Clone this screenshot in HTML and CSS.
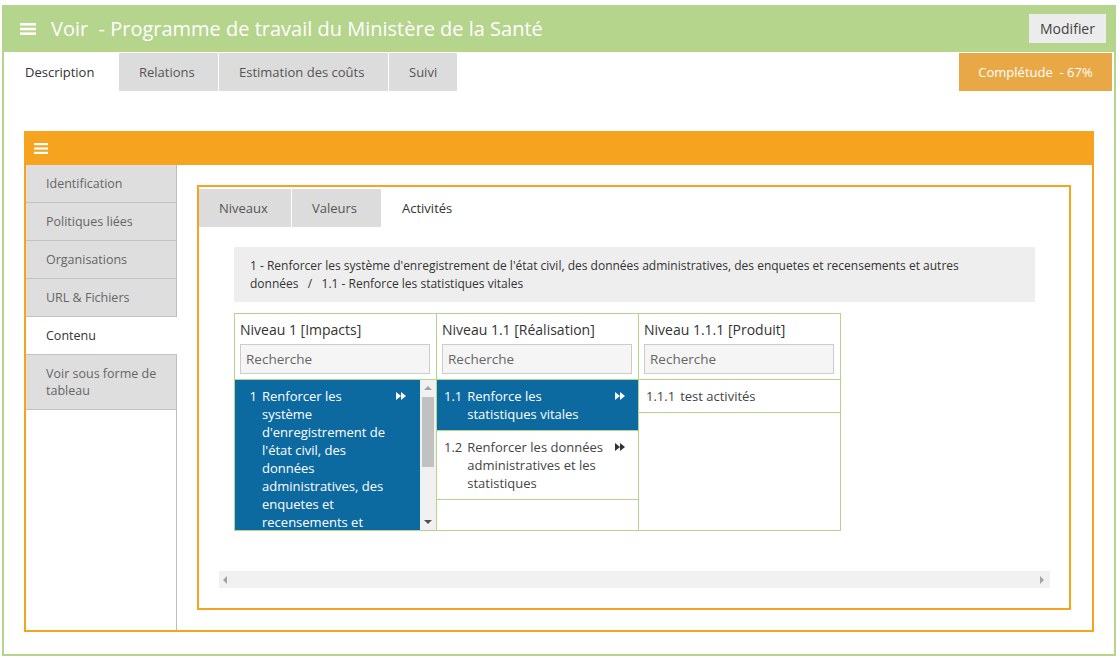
FILE: index.html
```html
<!DOCTYPE html>
<html lang="fr">
<head>
<meta charset="utf-8">
<title>Voir - Programme de travail du Ministère de la Santé</title>
<link rel="stylesheet" href="styles.css">
</head>
<body>
<div class="app">
  <header class="header">
    <svg class="burger" width="16" height="12" viewBox="0 0 16 12"><rect x="0" y="0" width="16" height="2.6" fill="#fff"/><rect x="0" y="4.7" width="16" height="2.6" fill="#fff"/><rect x="0" y="9.4" width="16" height="2.6" fill="#fff"/></svg>
    <h1 class="title">Voir&nbsp; - Programme de travail du Ministère de la Santé</h1>
    <button class="btn-modifier">Modifier</button>
  </header>

  <nav class="tabs">
    <div class="tab tab-desc active">Description</div>
    <div class="tab tab-rel">Relations</div>
    <div class="tab tab-est">Estimation des coûts</div>
    <div class="tab tab-suivi">Suivi</div>
    <div class="completude">Complétude&nbsp; - 67%</div>
  </nav>

  <section class="panel">
    <div class="panel-head">
      <svg width="14" height="11" viewBox="0 0 14 11"><rect x="0" y="0" width="14" height="2.2" fill="#fff"/><rect x="0" y="4.4" width="14" height="2.2" fill="#fff"/><rect x="0" y="8.8" width="14" height="2.2" fill="#fff"/></svg>
    </div>
    <div class="panel-body">
      <ul class="sidenav">
        <li class="nav-item">Identification</li>
        <li class="nav-item">Politiques liées</li>
        <li class="nav-item">Organisations</li>
        <li class="nav-item">URL &amp; Fichiers</li>
        <li class="nav-item active">Contenu</li>
        <li class="nav-item">Voir sous forme de tableau</li>
      </ul>

      <div class="content">
        <div class="box">
          <div class="subtabs">
            <div class="subtab st-niv">Niveaux</div>
            <div class="subtab st-val">Valeurs</div>
            <div class="subtab st-act active">Activités</div>
          </div>
          <div class="box-body">
            <div class="scroll-area">
              <div class="crumb">1 - Renforcer les système d'enregistrement de l'état civil, des données administratives, des enquetes et recensements et autres données&nbsp;&nbsp; / &nbsp;&nbsp;1.1 - Renforce les statistiques vitales</div>

              <div class="columns">
                <div class="col">
                  <div class="col-head">
                    <div class="col-title">Niveau 1 [Impacts]</div>
                    <input class="search" type="text" placeholder="Recherche">
                  </div>
                  <div class="col-list with-bar">
                    <div class="items">
                      <div class="item selected">
                        <span class="num">1</span>
                        <span class="label">Renforcer les système d'enregistrement de l'état civil, des données administratives, des enquetes et recensements et autres données</span>
                        <svg class="go" width="10" height="8" viewBox="0 0 10 8"><path d="M0 0L5 4L0 8Z M5 0L10 4L5 8Z" fill="#fff"/></svg>
                      </div>
                    </div>
                    <div class="vbar">
                      <span class="arrow-up"></span>
                      <span class="thumb"></span>
                      <span class="arrow-down"></span>
                    </div>
                  </div>
                </div>

                <div class="col">
                  <div class="col-head">
                    <div class="col-title">Niveau 1.1 [Réalisation]</div>
                    <input class="search" type="text" placeholder="Recherche">
                  </div>
                  <div class="col-list">
                    <div class="items">
                      <div class="item selected">
                        <span class="num">1.1</span>
                        <span class="label">Renforce les statistiques vitales</span>
                        <svg class="go" width="10" height="8" viewBox="0 0 10 8"><path d="M0 0L5 4L0 8Z M5 0L10 4L5 8Z" fill="#fff"/></svg>
                      </div>
                      <div class="item">
                        <span class="num">1.2</span>
                        <span class="label">Renforcer les données administratives et les statistiques</span>
                        <svg class="go" width="10" height="8" viewBox="0 0 10 8"><path d="M0 0L5 4L0 8Z M5 0L10 4L5 8Z" fill="#333"/></svg>
                      </div>
                    </div>
                  </div>
                </div>

                <div class="col">
                  <div class="col-head">
                    <div class="col-title">Niveau 1.1.1 [Produit]</div>
                    <input class="search" type="text" placeholder="Recherche">
                  </div>
                  <div class="col-list">
                    <div class="items">
                      <div class="item">
                        <span class="num">1.1.1</span>
                        <span class="label">test activités</span>
                      </div>
                    </div>
                  </div>
                </div>
              </div>
            </div>
            <div class="hbar">
              <span class="arrow-left"></span>
              <span class="arrow-right"></span>
            </div>
          </div>
        </div>
      </div>
    </div>
  </section>
</div>
</body>
</html>
```

FILE: styles.css
```css
* { box-sizing: border-box; }

body {
  margin: 0;
  font-family: "Open Sans", "Noto Sans", sans-serif;
  color: #333;
  background: #fff;
}

.app {
  margin: 5px 4px 0 2px;
  border: 2px solid #b5d48c;
  border-top: 0;
  padding-bottom: 22px;
}

/* header */
.header {
  height: 47px;
  background: #b5d48c;
  display: flex;
  align-items: center;
  padding: 0 8px 0 18px;
  margin: 0 -2px;
}
.burger { display: block; margin-top: 1px; }
.title {
  margin: 0 0 0 15px;
  font-size: 20px;
  font-weight: 400;
  color: #fff;
  flex: 1;
}
.btn-modifier {
  height: 29px;
  width: 77px;
  border: 0;
  background: #ececec;
  color: #444;
  font-family: inherit;
  font-size: 14px;
  padding: 0;
  margin-right: 2px;
}

/* main tabs */
.tabs {
  display: flex;
  margin-top: 1px;
  height: 38px;
}
.tab {
  background: #dcdcdc;
  color: #555;
  font-size: 13px;
  line-height: 38px;
  margin-right: 1px;
  padding-left: 20px;
}
.tab-desc { width: 114px; padding-left: 21px; }
.tab-rel { width: 99px; }
.tab-est { width: 169px; }
.tab-suivi { width: 68px; }
.tab.active {
  background: #fff;
  color: #333;
}
.completude {
  margin-left: auto;
  width: 153px;
  background: #e9a846;
  color: #fff;
  font-size: 13px;
  line-height: 38px;
  text-align: center;
  margin-right: 2px;
}

/* orange panel */
.panel {
  margin: 40px 20px 0 20px;
}
.panel-head {
  height: 34px;
  background: #f6a31f;
  display: flex;
  align-items: center;
  padding-left: 10px;
}
.panel-head svg { display: block; margin-top: 1px; }
.panel-body {
  display: flex;
  border: 2px solid #f6a31f;
  border-top: 0;
}

.sidenav {
  list-style: none;
  margin: 0;
  padding: 0;
  width: 151px;
  flex: none;
  border-right: 1px solid #bdbdbd;
}
.nav-item {
  background: #dedede;
  color: #666;
  font-size: 12.5px;
  line-height: 17px;
  padding: 10px 10px 10px 20px;
  border-bottom: 1px solid #c2c2c2;
}
.nav-item.active {
  background: #fff;
  color: #333;
  margin-right: -1px;
}

.content {
  flex: 1;
  padding: 20px 21px 20px 20px;
}

.box {
  border: 2px solid #f6a31f;
  padding-top: 2px;
}
.subtabs {
  display: flex;
  height: 38px;
}
.subtab {
  background: #dcdcdc;
  color: #555;
  font-size: 13px;
  line-height: 38px;
  padding-left: 20px;
}
.st-niv { width: 92px; margin-right: 1px; }
.st-val { width: 89px; }
.st-act { width: 89px; padding-left: 21px; }
.subtab.active {
  background: #fff;
  color: #333;
}

.box-body {
  padding: 20px 19px 20px 20px;
}
.scroll-area {
  padding: 0 15px 40px 15px;
}

.crumb {
  background: #eeeeee;
  font-size: 12px;
  line-height: 18px;
  color: #333;
  padding: 10px 40px 9px 16px;
  height: 55px;
}

.columns {
  margin-top: 11px;
  display: flex;
  border-left: 1px solid #b5d48c;
}
.col {
  width: 202px;
  border: 1px solid #b5d48c;
  border-left: 0;
  display: flex;
  flex-direction: column;
}
.col-head {
  padding: 6px 6px 5px 5px;
  border-bottom: 1px solid #b5d48c;
}
.col-title {
  font-size: 14px;
  line-height: 20px;
  color: #333;
}
.search {
  display: block;
  margin-top: 4px;
  width: 100%;
  height: 30px;
  background: #f5f5f5;
  border: 1px solid #cccccc;
  font-family: inherit;
  font-size: 13.5px;
  padding: 0 5px;
  color: #333;
}
.search::placeholder { color: #666; }

.col-list {
  height: 150px;
  display: flex;
  overflow: hidden;
}
.items { flex: 1; min-width: 0; }
.item {
  display: flex;
  align-items: flex-start;
  padding: 7px 0 7px 7px;
  font-size: 13px;
  line-height: 18px;
  color: #444;
  border-bottom: 1px solid #b5d48c;
}
.item.selected {
  background: #0d6aa1;
  color: #fff;
}
.with-bar .item { border-bottom: 0; padding-left: 9px; }
.num {
  min-width: 13px;
  text-align: right;
  margin-right: 5px;
  flex: none;
}
.label { flex: 1; }
.go {
  flex: none;
  margin: 5px 13px 0 8px;
}
.with-bar .go { margin: 5px 14px 0 4px; }

.vbar {
  width: 16px;
  flex: none;
  background: #f1f1f1;
  position: relative;
}
.thumb {
  position: absolute;
  left: 2px;
  right: 2px;
  top: 17px;
  height: 70px;
  background: #c1c1c1;
}
.arrow-up, .arrow-down {
  position: absolute;
  left: 4px;
  width: 0;
  height: 0;
  border-left: 4px solid transparent;
  border-right: 4px solid transparent;
}
.arrow-up { top: 6px; border-bottom: 4px solid #a3a3a3; }
.arrow-down { bottom: 6px; border-top: 4px solid #505050; }

.hbar {
  height: 17px;
  background: #f1f1f1;
  position: relative;
}
.arrow-left, .arrow-right {
  position: absolute;
  top: 5px;
  width: 0;
  height: 0;
  border-top: 4px solid transparent;
  border-bottom: 4px solid transparent;
}
.arrow-left { left: 4px; border-right: 4px solid #a3a3a3; }
.arrow-right { right: 6px; border-left: 4px solid #a3a3a3; }
```
